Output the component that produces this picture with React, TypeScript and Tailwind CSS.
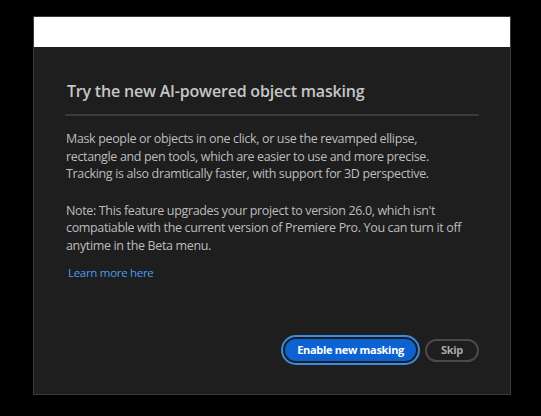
export default function App() {
  const font = { fontFamily: '"Open Sans", "Noto Sans", Arial, sans-serif' };
  return (
    <div className="w-[541px] h-[416px] bg-black pt-[16px] pl-[33px]" style={font}>
      <div className="w-[478px] border border-[#3a3a3a] flex flex-col">
        <div className="h-[30px] bg-white" />
        <div className="h-[347px] bg-[#1e1e1e] flex flex-col pl-[31px] pr-[31px] pt-[33px] pb-[29px]">
          <div className="pl-[2px] text-[16px] leading-[22px] font-semibold text-[#c6c6c6] tracking-[-0.2px]">
            Try the new AI-powered object masking
          </div>
          <div className="mt-[12px] h-[2px] bg-[#3a3a3a]" />
          <div className="pl-[1px] mt-[14px] text-[12.5px] leading-[17.5px] text-[#bdbdbd] tracking-[-0.35px]">
            <p>
              Mask people or objects in one click, or use the revamped ellipse,
              <br />
              rectangle and pen tools, which are easier to use and more precise.
              <br />
              Tracking is also dramtically faster, with support for 3D perspective.
            </p>
            <p className="mt-[19px]">
              Note: This feature upgrades your project to version 26.0, which isn't
              <br />
              compatiable with the current version of Premiere Pro. You can turn it off
              <br />
              anytime in the Beta menu.
            </p>
          </div>
          <div className="mt-[11px] pl-[3px] text-[11.5px] leading-[16px] text-[#4a9cf3] tracking-[-0.3px]">Learn more here</div>
          <div className="mt-auto flex justify-end items-center gap-[5px]">
            <div className="rounded-full border-[2px] border-[#3d8be0] p-[2px] bg-[#1e1e1e]">
              <div className="h-[22px] px-[12px] rounded-full bg-[#0d62d1] flex items-center text-[11px] font-bold text-white tracking-[-0.3px]">
                Enable new masking
              </div>
            </div>
            <div className="h-[23px] px-[14px] rounded-full border-[2px] border-[#4a4a4a] flex items-center text-[11px] font-bold text-[#a8a8a8] tracking-[-0.3px]">
              Skip
            </div>
          </div>
        </div>
      </div>
    </div>
  );
}
